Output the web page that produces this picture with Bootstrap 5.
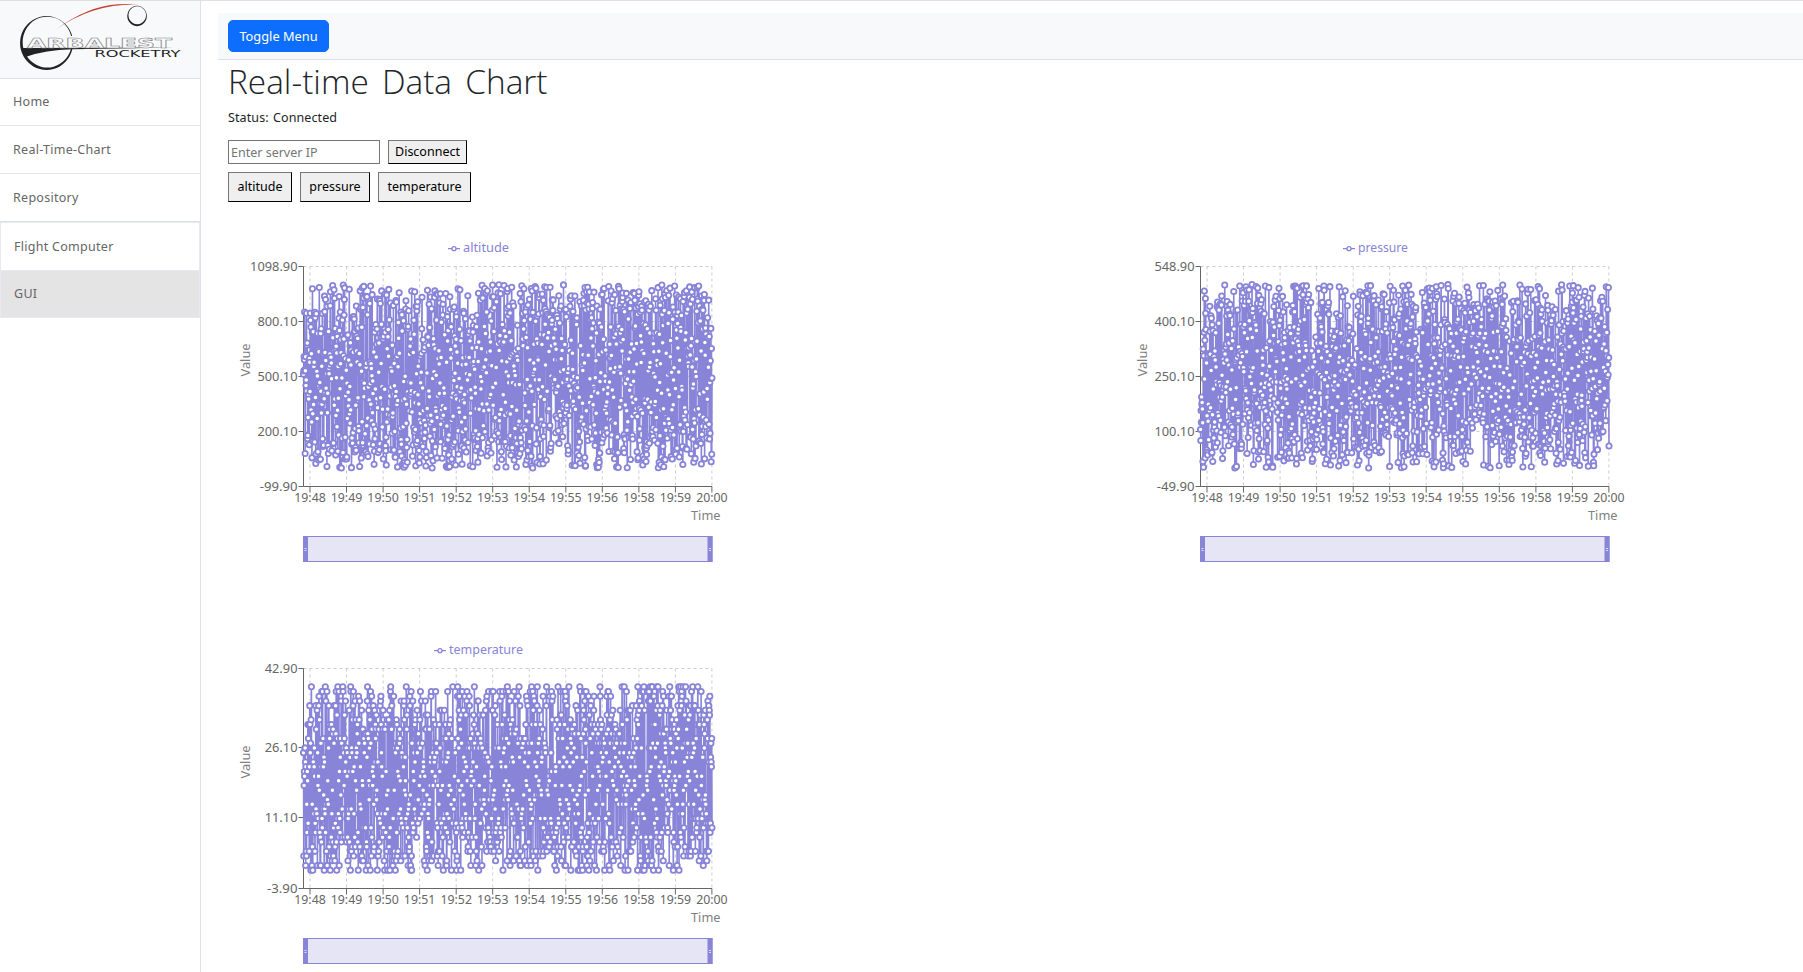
<!DOCTYPE html>
<html lang="en">
<head>
<meta charset="utf-8">
<meta name="viewport" content="width=device-width, initial-scale=1">
<title>Real-time Data Chart</title>
<link href="https://cdn.jsdelivr.net/npm/bootstrap@5.3.0/dist/css/bootstrap.min.css" rel="stylesheet">
<style>
html,body{height:100%}
body{font-family:"Noto Sans","Open Sans",sans-serif;font-size:12.5px;overflow:hidden;border-top:1px solid #dee0e2;background:#fff}
.side{width:201px}
.side-head{height:78px;background:#f8f9fb}
.side .list-group-item{height:48px;padding:1px 13px 0;display:flex;align-items:center;color:#666;border-color:#e3e6ea;letter-spacing:.28px}
.side .list-group-item:first-child{height:47px}
.side .sub .list-group-item{border:1px solid #e6e9ed;border-bottom:0;height:48px}
.side .sub .list-group-item:last-child{background:#e4e4e4;border-bottom:1px solid #e6e9ed}
.main{padding:12px 0 0 17px;min-width:0;overflow:hidden}
.topbar{height:47px;background:#f8f9fb;padding:0 10px}
.topbar .btn{width:101px;height:32px;padding:2px 0 0;font-size:12.8px;border-radius:5px}
.page{padding-left:10px}
h1{font:300 33.4px/44px "Open Sans","Noto Sans",sans-serif;word-spacing:4.5px;margin:-1px 0 0;height:49px}
.status{height:32px;line-height:20px;letter-spacing:.1px;word-spacing:1px}
.ip{width:152px;height:24px;border:1px solid #767676;border-radius:0;padding:0 1px 0 2px;font-size:12.5px}
.ip::placeholder{color:#757575}
.raw{border:1px solid;border-color:#767676 #000 #000 #767676;background:#efefef;color:#000;padding:0;font-size:12.5px}
.charts{display:grid;grid-template-columns:897px 1fr;grid-auto-rows:402px;margin-top:30px}
.charts svg{display:block;overflow:visible;font-size:12.5px}
</style>
</head>
<body>
<div class="d-flex h-100">
  <aside class="side border-end flex-shrink-0">
    <div class="side-head border-bottom">
      <svg width="200" height="77" viewBox="0 1 200 77" aria-label="Arbalest Rocketry">
        <path fill="#222" fill-rule="evenodd" d="M46.5 16a26.5 27 0 1 0 .1 0zM47.3 16.7a24.6 25.4 0 1 1-.1 0z"/>
        <path fill="#f8f9fb" d="M66 36h8v12h-8z"/>
        <path fill="#222" d="M21 48L175 47.6 72 49.2Q45 50 27 56.5Q22 53 21 48z"/>
        <path fill="#c4402f" d="M56 29.5Q88 6 118 4.3Q130 3.5 139 4.7Q94 3 56 29.5z"/>
        <path fill="#222" fill-rule="evenodd" d="M137 5.8a9.8 10.2 0 1 0 .1 0zM137.3 6.2a8.8 9 0 1 1-.1 0z"/>
        <text x="27" y="47.6" font-family="DejaVu Sans" font-weight="bold" font-size="14.5" textLength="145" lengthAdjust="spacingAndGlyphs" fill="#f8f9fb" stroke="#888" stroke-width=".55">ARBALEST</text>
        <text x="94.5" y="57" font-family="DejaVu Sans" font-size="8.6" textLength="86" lengthAdjust="spacingAndGlyphs" fill="#222">ROCKETRY</text>
      </svg>
    </div>
    <div class="list-group list-group-flush">
      <a class="list-group-item">Home</a>
      <a class="list-group-item">Real-Time-Chart</a>
      <a class="list-group-item border-bottom">Repository</a>
    </div>
    <div class="list-group rounded-0 sub">
      <a class="list-group-item rounded-0">Flight Computer</a>
      <a class="list-group-item rounded-0">GUI</a>
    </div>
  </aside>
  <main class="main flex-grow-1">
    <nav class="topbar border-bottom d-flex align-items-center"><button class="btn btn-primary">Toggle Menu</button></nav>
    <div class="page">
      <h1>Real-time Data Chart</h1>
      <div class="status">Status: Connected</div>
      <div class="d-flex gap-2">
        <input class="ip" placeholder="Enter server IP">
        <button class="raw" style="width:79px">Disconnect</button>
      </div>
      <div class="d-flex mt-2" style="height:30px">
        <button class="raw me-2" style="width:64px">altitude</button>
        <button class="raw me-2" style="width:70px">pressure</button>
        <button class="raw" style="width:93px">temperature</button>
      </div>
      <div class="charts" id="charts"></div>
    </div>
  </main>
</div>
<script src="https://cdn.jsdelivr.net/npm/bootstrap@5.3.0/dist/js/bootstrap.bundle.min.js"></script>
<script>
const L = 75.5, R = 484, T = 34.5, B = 254.5, C = '#8884d8';
const times = ['19:48','19:49','19:50','19:51','19:52','19:53','19:54','19:55','19:56','19:58','19:59','20:00'];
const charts = [
  {name:'altitude', min:-99.9, max:1098.9, ticks:[1098.9,800.1,500.1,200.1,-99.9], top:1000, seed:11, lx:220, tw:46},
  {name:'pressure', min:-49.9, max:548.9, ticks:[548.9,400.1,250.1,100.1,-49.9], top:500, seed:29, lx:218, tw:50},
  {name:'temperature', min:-3.9, max:42.9, ticks:[42.9,26.1,11.1,-3.9], top:39, whole:true, seed:47, lx:206, tw:74}
];
function random(s) {
  return () => { s = s + 0x6D2B79F5 | 0; let t = Math.imul(s ^ s >>> 15, 1 | s);
    t = t + Math.imul(t ^ t >>> 7, 61 | t) ^ t; return ((t ^ t >>> 14) >>> 0) / 4294967296; };
}
function label(x, y, text, width, anchor, fill) {
  return `<text x="${x}" y="${y}" text-anchor="${anchor}" fill="${fill}" textLength="${width}" lengthAdjust="spacingAndGlyphs">${text}</text>`;
}
document.getElementById('charts').innerHTML = charts.map(c => {
  const y = v => T + (c.max - v) / (c.max - c.min) * (B - T);
  const tickX = i => (82 + i * 36.54).toFixed(1);
  const next = random(c.seed), n = 1500, pts = [];
  for (let i = 0; i < n; i++) {
    const v = c.whole ? Math.floor(next() * (c.top + 1)) : next() * c.top;
    pts.push([(L + i * (R - L) / (n - 1)).toFixed(2), y(v).toFixed(2)]);
  }
  let s = '<g stroke="#ccc" stroke-dasharray="3 3">';
  c.ticks.forEach(v => { const p = Math.round(y(v) - .5) + .5; s += `<path d="M${L} ${p}H${R}"/>`; });
  times.forEach((t, i) => { s += `<path d="M${tickX(i)} ${T}V${B}"/>`; });
  s += '</g><g stroke="#666" fill="none">' + `<path d="M${L} ${T}V${B}H${R}"/>`;
  c.ticks.forEach(v => { s += `<path d="M${L - 5} ${Math.round(y(v) - .5) + .5}H${L}"/>`; });
  times.forEach((t, i) => { s += `<path d="M${tickX(i)} ${B}v6"/>`; });
  s += '</g>';
  c.ticks.forEach(v => { const t = v.toFixed(2); s += label(69.5, y(v) + 4.5, t, [...t].reduce((w, ch) => w + (ch === '.' ? 3.6 : ch === '-' ? 5 : 7.3), 0), 'end', '#666'); });
  times.forEach((t, i) => { s += label(tickX(i), 270, t, 31.5, 'middle', '#666'); });
  s += label(492.5, 288, 'Time', 29.5, 'end', '#808080');
  s += `<g transform="translate(22 128) rotate(-90)">${label(0, 0, 'Value', 33, 'middle', '#808080')}</g>`;
  s += `<path d="M${pts.map(p => p.join(' ')).join('L')}" fill="none" stroke="${C}" stroke-width="1.6"/>`;
  s += `<g fill="#fff" stroke="${C}" stroke-width="1.8">` + pts.map(p => `<circle cx="${p[0]}" cy="${p[1]}" r="2.65"/>`).join('') + '</g>';
  s += `<g fill="none" stroke="${C}" stroke-width="1.3"><path d="M${c.lx} 16.7h4m4 0h4"/><circle cx="${c.lx + 6}" cy="16.7" r="2"/></g>`;
  s += label(c.lx + 15, 20, c.name, c.tw, 'start', C);
  s += `<rect x="75.5" y="304.5" width="408.5" height="25" fill="#e6e5f6" stroke="${C}"/><path fill="${C}" d="M75 304h5v26h-5zM479.5 304h5v26h-5z"/>`;
  s += '<path stroke="#fff" stroke-opacity=".7" d="M76.5 316.5h2m-2 2h2m402.500-2h2m-2 2h2"/>';
  return `<svg width="500" height="335">${s}</svg>`;
}).join('');
</script>
</body>
</html>
